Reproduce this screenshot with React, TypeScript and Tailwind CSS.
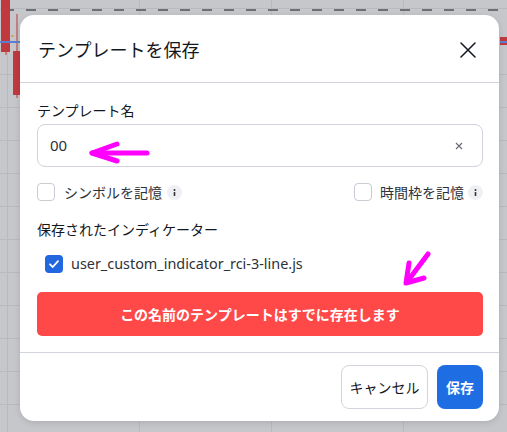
import React from "react";

const FONT = { fontFamily: "'Noto Sans', 'Noto Sans CJK JP', sans-serif" };

function InfoIcon() {
  return (
    <span className="flex h-[15px] w-[15px] items-center justify-center rounded-full bg-[#eff0f3]">
      <svg width="15" height="15" viewBox="0 0 15 15">
        <circle cx="7.5" cy="5" r="1" fill="#2e3137" />
        <rect x="6.7" y="7" width="1.6" height="4" rx="0.6" fill="#2e3137" />
      </svg>
    </span>
  );
}

function Background() {
  const hLines = [8, 41, 74, 107, 140, 173, 206, 239, 272, 305, 338, 371, 404];
  const vLines = [7, 139, 271, 403];
  const dashes = [];
  for (let x = 4; x < 507; x += 22) dashes.push(x);
  return (
    <svg className="absolute inset-0" width="507" height="432" viewBox="0 0 507 432">
      <rect width="507" height="432" fill="#c6c7cb" />
      {hLines.map((y) => (
        <line key={"h" + y} x1="0" x2="507" y1={y + 0.5} y2={y + 0.5} stroke="#b9babf" strokeWidth="1" />
      ))}
      {vLines.map((x) => (
        <line key={"v" + x} x1={x + 0.5} x2={x + 0.5} y1="0" y2="432" stroke="#b9babf" strokeWidth="1" />
      ))}
      {dashes.map((x) => (
        <rect key={"d" + x} x={x} y="9" width="10" height="2" fill="#6e6f73" />
      ))}
      <line x1="6" x2="6" y1="48" y2="55" stroke="#c0393f" strokeWidth="1" />
      <rect x="1" y="0" width="9" height="52" fill="#c0393f" />
      <line x1="17" x2="17" y1="14" y2="98" stroke="#c0393f" strokeWidth="1" />
      <rect x="13" y="51" width="8" height="44" fill="#c0393f" />
      <rect x="0" y="41" width="20" height="2" fill="#5b7fd0" />
      <rect x="11" y="35" width="3" height="2" fill="#e8a04a" />
      <rect x="500" y="37" width="7" height="8" fill="#c0393f" />
      <rect x="500" y="41" width="7" height="2" fill="#5b7fd0" />
    </svg>
  );
}

export default function App() {
  return (
    <div className="relative h-[432px] w-[507px] overflow-hidden" style={FONT}>
      <Background />
      <div className="absolute left-[20px] top-[15px] flex h-[406px] w-[479px] flex-col rounded-[14px] bg-white shadow-[0_2px_6px_rgba(0,0,0,0.12)]">
        {/* Header */}
        <div className="flex h-[68px] items-center justify-between border-b border-[#d1d4dc] pl-[18px] pr-[23px] pt-[2px]">
          <span className="text-[18px] leading-[24px] text-[#131722]">テンプレートを保存</span>
          <svg width="16" height="16" viewBox="0 0 16 16">
            <path d="M1 1L15 15M15 1L1 15" stroke="#131722" strokeWidth="1.5" strokeLinecap="round" />
          </svg>
        </div>

        {/* Body */}
        <div className="relative flex flex-col border-b border-[#d1d4dc] pb-[16px] pl-[17px] pr-[16px] pt-[18px]">
          <div className="text-[14px] leading-[20px] text-[#131722]">テンプレート名</div>
          <div className="mt-[3px] flex h-[43px] items-center justify-between rounded-[8px] border border-[#d1d4dc] pl-[12px] pr-[19px]">
            <span className="text-[15px] text-[#2e3137]">00</span>
            <svg width="8" height="8" viewBox="0 0 8 8">
              <path d="M1 1L7 7M7 1L1 7" stroke="#6a6d78" strokeWidth="1.2" />
            </svg>
          </div>

          <div className="mt-[15px] flex h-[20px] items-center justify-between">
            <div className="flex items-center">
              <span className="h-[18px] w-[18px] rounded-[4px] border border-[#c9ccd4] bg-white" />
              <span className="ml-[9px] text-[14px] text-[#2e3137]">シンボルを記憶</span>
              <span className="ml-[5px]"><InfoIcon /></span>
            </div>
            <div className="flex items-center">
              <span className="h-[18px] w-[18px] rounded-[4px] border border-[#c9ccd4] bg-white" />
              <span className="ml-[8px] text-[14px] text-[#2e3137]">時間枠を記憶</span>
              <span className="ml-[4px]"><InfoIcon /></span>
            </div>
          </div>

          <div className="mt-[18px] text-[14px] leading-[20px] text-[#131722]">保存されたインディケーター</div>

          <div className="mt-[14px] flex h-[20px] items-center pl-[8px]">
            <span className="flex h-[18px] w-[18px] items-center justify-center rounded-[4px] bg-[#2266e0]">
              <svg width="12" height="12" viewBox="0 0 12 12">
                <path d="M2 6.3L4.8 9L10 3.2" stroke="white" strokeWidth="1.8" fill="none" strokeLinecap="round" strokeLinejoin="round" />
              </svg>
            </span>
            <span className="ml-[8px] text-[14.4px] text-[#2e3137]">user_custom_indicator_rci-3-line.js</span>
          </div>

          <div className="mt-[18px] flex h-[44px] items-center justify-center rounded-[5px] bg-[#ff4949]">
            <span className="text-[14px] font-bold text-white">この名前のテンプレートはすでに存在します</span>
          </div>

          {/* annotation arrows, drawn in page coordinates */}
          <svg className="pointer-events-none absolute left-[-20px] top-[-83px]" width="507" height="432" viewBox="0 0 507 432">
            <g stroke="#ff00ff" strokeWidth="5" strokeLinecap="round" strokeLinejoin="round" fill="none">
              <path d="M92 153L147 153" />
              <path d="M117 144L92 153L117 161" />
              <path d="M428 254L407 282" />
              <path d="M409 263L406 283L424 278" />
            </g>
          </svg>
        </div>

        {/* Footer */}
        <div className="flex flex-1 items-center justify-end gap-[9px] pr-[16px]">
          <button className="flex h-[44px] w-[87px] items-center justify-center rounded-[8px] border border-[#d1d4dc] bg-white text-[14px] text-[#131722]">
            キャンセル
          </button>
          <button className="flex h-[44px] w-[46px] items-center justify-center rounded-[8px] bg-[#1e6de3] text-[14px] font-bold text-white">
            保存
          </button>
        </div>
      </div>
    </div>
  );
}
